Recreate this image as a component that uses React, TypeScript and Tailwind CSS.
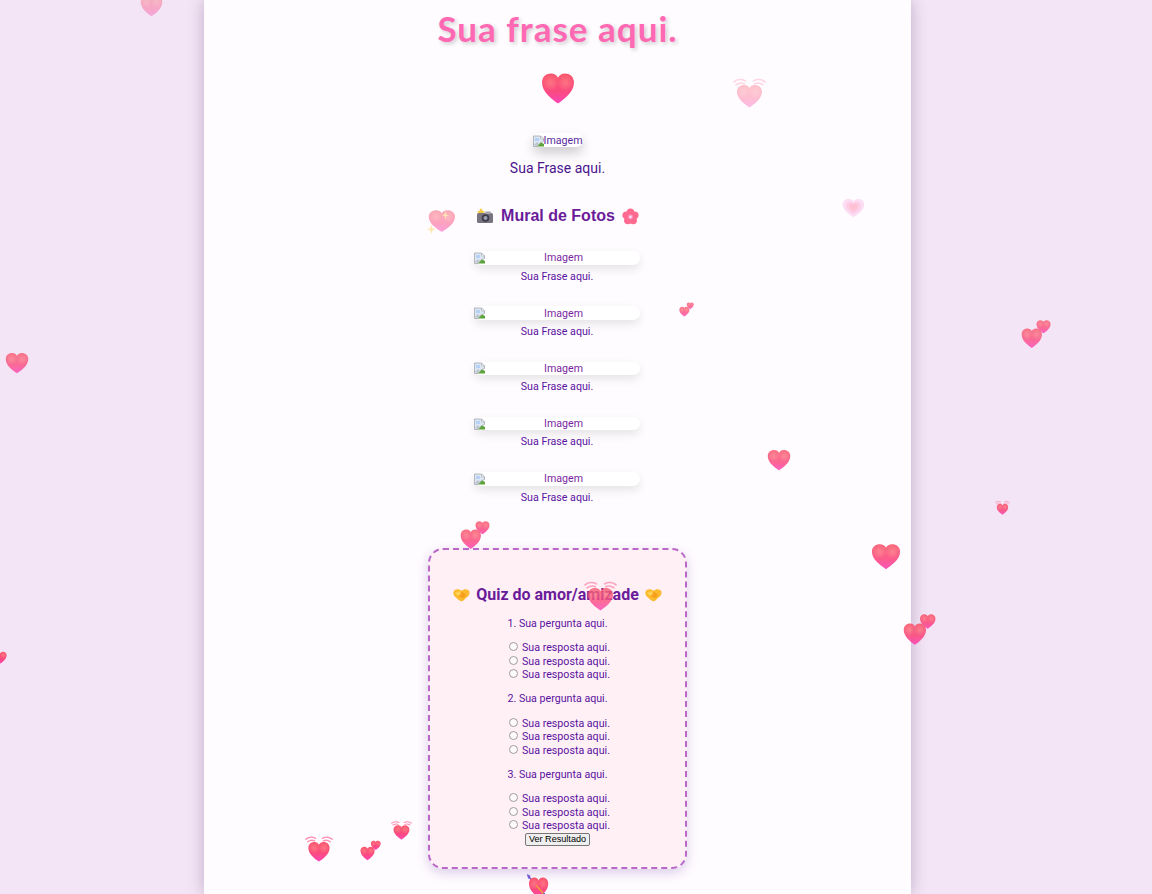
const hearts = [
  { kind: "plain", box: "left-[140px] top-[-5px] w-[23px] h-[22px] opacity-40" },
  { kind: "waves", box: "left-[733px] top-[77px] w-[33px] h-[31px] opacity-35" },
  { kind: "grow", box: "left-[842px] top-[198px] w-[23px] h-[21px] opacity-50" },
  { kind: "spark", box: "left-[427px] top-[209px] w-[28px] h-[25px] opacity-50" },
  { kind: "two", box: "left-[679px] top-[302px] w-[15px] h-[15px] opacity-80" },
  { kind: "two", box: "left-[1021px] top-[319px] w-[30px] h-[30px] opacity-80" },
  { kind: "plain", box: "left-[5px] top-[352px] w-[24px] h-[22px] opacity-80" },
  { kind: "plain", box: "left-[767px] top-[449px] w-[24px] h-[22px] opacity-85" },
  { kind: "waves", box: "left-[995px] top-[500px] w-[15px] h-[15px] opacity-90" },
  { kind: "two", box: "left-[460px] top-[520px] w-[30px] h-[30px] opacity-85" },
  { kind: "plain", box: "left-[871px] top-[543px] w-[30px] h-[27px] opacity-90" },
  { kind: "waves", box: "left-[584px] top-[580px] w-[33px] h-[31px] opacity-80" },
  { kind: "two", box: "left-[903px] top-[613px] w-[33px] h-[33px] opacity-90" },
  { kind: "plain", box: "left-[-6px] top-[651px] w-[13px] h-[13px]" },
  { kind: "waves", box: "left-[391px] top-[820px] w-[21px] h-[20px]" },
  { kind: "waves", box: "left-[305px] top-[835px] w-[28px] h-[27px]" },
  { kind: "two", box: "left-[360px] top-[840px] w-[21px] h-[21px]" },
  { kind: "arrow", box: "left-[526px] top-[874px] w-[25px] h-[26px]" },
];

// fuller than a geometric heart, the lobes nearly touch the box edge
const heartPath =
  "M16 29.500 C11 26 1 19 1 10 C1 4.500 5 1.500 9.500 1.500 C12.500 1.500 15 3 16 5.500 C17 3 19.500 1.500 22.500 1.500 C27 1.500 31 4.500 31 10 C31 19 21 26 16 29.500 Z";

function HeartShape({ transform }: { transform?: string }) {
  return (
    <g transform={transform}>
      <path d={heartPath} fill="url(#heartFill)" />
      <ellipse cx="9" cy="10" rx="8" ry="8" fill="url(#heartGlow)" />
      <ellipse cx="23" cy="10" rx="8" ry="8" fill="url(#heartGlow)" />
    </g>
  );
}

function Waves() {
  return (
    <g fill="none" stroke="#ff8fb0" strokeWidth="1.600" strokeLinecap="round">
      <path d="M1 5 C4 2 9 2 12 4" />
      <path d="M3 8 C6 6 9 6 11 7" />
      <path d="M31 5 C28 2 23 2 20 4" />
      <path d="M29 8 C26 6 23 6 21 7" />
    </g>
  );
}

function FloatingHeart({ kind, className }: { kind: string; className: string }) {
  return (
    <svg viewBox="0 0 32 32" preserveAspectRatio="none" className={"absolute " + className}>
      {kind === "plain" && <HeartShape transform="translate(0 0) scale(1 1.050)" />}
      {kind === "waves" && (
        <>
          <Waves />
          <HeartShape transform="translate(3 7) scale(0.810 0.830)" />
        </>
      )}
      {kind === "two" && (
        <>
          <HeartShape transform="translate(16 0.500) scale(0.500 0.500)" />
          <HeartShape transform="translate(0 9) scale(0.720 0.740)" />
        </>
      )}
      {kind === "grow" && (
        <>
          <path d={heartPath} fill="#f7a8e0" opacity="0.7" />
          <path d={heartPath} fill="#ff8fc0" opacity="0.7" transform="translate(5 4.500) scale(0.690 0.690)" />
          <path d={heartPath} fill="#ff7f9f" opacity="0.8" transform="translate(9.500 8) scale(0.400 0.420)" />
        </>
      )}
      {kind === "spark" && (
        <>
          <HeartShape transform="translate(1 0)" />
          <path d="M5 20 L6.300 24.500 L10 26 L6.300 27.500 L5 32 L3.700 27.500 L0 26 L3.700 24.500 Z" fill="#ffd76a" />
          <path d="M21 3 L22 7 L25 8 L22 9 L21 13 L20 9 L17 8 L20 7 Z" fill="#ffd76a" />
        </>
      )}
      {kind === "arrow" && (
        <>
          <path d="M1 0 L6 2 L3 6 Z" fill="#7a5bd6" />
          <path d="M3 3 L9 9" stroke="#7a5bd6" strokeWidth="2" />
          <HeartShape transform="translate(3 3) scale(0.820 0.900)" />
          <path d="M13 14 L26 28" stroke="#f09a3e" strokeWidth="2" />
          <path d="M22 24 L32 33" stroke="#6a5bd0" strokeWidth="3" />
        </>
      )}
    </svg>
  );
}

function BrokenImage() {
  return (
    <svg viewBox="0 0 11 12" className="w-[11px] h-[12px] shrink-0">
      <path d="M0.500 1 H7.500 L10.500 4 V6.500 L7 8 L4 11.500 H0.500 Z" fill="#dde6f3" stroke="#a3a8ae" strokeWidth="0.800" />
      <path d="M7.500 1 V4 H10.500 Z" fill="#ffffff" stroke="#a3a8ae" strokeWidth="0.600" />
      <path d="M2 3 H6 V6 H2 Z" fill="#b7d0f5" />
      <path d="M4 11.500 L8 7.500 L11 9 V11.500 Z" fill="#5da33b" />
      <path d="M1 10 L4 7 L5.500 8.500 L3.500 11 Z" fill="#bcc2ca" />
    </svg>
  );
}

function Camera() {
  return (
    <svg viewBox="0 0 18 16" className="w-[18px] h-4">
      <path d="M5 0 L6.500 2.500 L9 4 L6.500 5.500 L5 8 L3.500 5.500 L1 4 L3.500 2.500 Z" fill="#f6c945" />
      <rect x="1" y="5" width="16" height="10" rx="1.500" fill="#77747f" />
      <rect x="9" y="3.500" width="6" height="2.500" rx="0.800" fill="#a5a3ad" />
      <circle cx="9.500" cy="10" r="3.800" fill="#3f3c48" />
      <circle cx="9.500" cy="10" r="2" fill="#9a9db5" />
    </svg>
  );
}

function Blossom() {
  return (
    <svg viewBox="0 0 18 18" className="w-[17px] h-[17px]">
      <g fill="#ff6a90">
        <circle cx="9" cy="4.500" r="4" />
        <circle cx="13.500" cy="7.800" r="4" />
        <circle cx="11.800" cy="13.200" r="4" />
        <circle cx="6.200" cy="13.200" r="4" />
        <circle cx="4.500" cy="7.800" r="4" />
      </g>
      <circle cx="9" cy="9.500" r="2.600" fill="#ff9cc0" />
      <circle cx="9" cy="9.500" r="1.200" fill="#f0e6ff" />
    </svg>
  );
}

function Handshake() {
  return (
    <svg viewBox="0 0 18 14" className="w-[17px] h-[14px]">
      <path d="M0.500 3.500 C2 1 5 0.500 7 1.500 L9 2.500 L11 1.500 C13 0.500 16 1 17.500 3.500 C18 6 16 8.500 14 10 L10 13.500 C8.500 14 6.500 13 4.500 11 L1.500 8 C0.500 6.500 0.200 5 0.500 3.500 Z" fill="#fbb92e" />
      <path d="M6 5 L10 3.500 L14 7 L11 10.500 L6 8 Z" fill="#f59f1c" />
      <path d="M2 5 L6 3 L9 5 L6 8 Z" fill="#ffd257" />
    </svg>
  );
}

function GalleryItem() {
  return (
    <div className="flex flex-col items-center">
      <div className="flex w-[166px] h-[13.500px] items-center bg-white rounded-[8px] shadow-[0_4px_10px_rgba(0,0,0,0.1)] text-[10.670px] leading-[13px] text-[#7b1fa2]">
        <BrokenImage />
        <span className="flex-1 text-center pl-[2px]">Imagem</span>
      </div>
      <p className="mt-[5px] h-[14px] text-[10.670px] leading-[14px]">Sua Frase aqui.</p>
    </div>
  );
}

function QuizQuestion({ n }: { n: number }) {
  return (
    <div className="flex flex-col items-center">
      <p className="h-[14px] text-[10.670px] leading-[14px]">{n}. Sua pergunta aqui.</p>
      <div className="mt-[11px] flex flex-col items-start pl-[4px]">
        {[0, 1, 2].map((i) => (
          <label key={i} className="flex h-[13.500px] items-center text-[10.670px] leading-[14px]">
            <input type="radio" name={"q" + n} className="mr-[4px] mb-[3px] w-[9px] h-[9px] opacity-70" />
            Sua resposta aqui.
          </label>
        ))}
      </div>
    </div>
  );
}

export default function App() {
  return (
    <div className="relative h-[894px] overflow-hidden bg-[#f3e5f5] font-['Roboto',sans-serif] text-[#5a12a0]">
      <main className="w-[707px] h-[894px] ml-[204px] flex flex-col items-center bg-[#fffcff] shadow-[0_0_15px_rgba(60,20,90,0.28)]">
        <h1 className="mt-[8px] h-[40px] text-[35px] leading-[40px] font-bold tracking-[1px] text-[#ff69b4] font-['Lato','Open_Sans',sans-serif] [text-shadow:2px_2px_4px_rgba(0,0,0,0.2)]">
          Sua frase aqui.
        </h1>

        <svg viewBox="0 0 32 31" className="mt-[24px] w-[36px] h-[33px]">
          <HeartShape />
        </svg>

        <div className="mt-[28px] flex w-[50px] h-[14px] pt-[1px] items-center bg-white rounded-[8px] shadow-[0_6px_12px_rgba(0,0,0,0.2)] text-[10.670px] leading-[14px] whitespace-nowrap text-[#5a2aa0]">
          <BrokenImage />
          Imagem
        </div>
        <p className="mt-[11px] h-[20px] text-[14px] leading-[20px] text-[#4a148c]">Sua Frase aqui.</p>

        <h2 className="mt-[27px] h-[22px] flex items-center gap-[7px] text-[16px] font-bold text-[#6a1b9a] font-['Liberation_Sans',sans-serif]">
          <Camera />
          Mural de Fotos
          <Blossom />
        </h2>

        <section className="mt-[24px] -ml-[1px] flex flex-col gap-[22.750px]">
          <GalleryItem />
          <GalleryItem />
          <GalleryItem />
          <GalleryItem />
          <GalleryItem />
        </section>

        <section className="mt-[43px] w-[259px] h-[321px] pt-[33px] flex flex-col items-center bg-[#fff0f5] rounded-[15px] border-2 border-dashed border-[#ba68c8] shadow-[0_4px_12px_rgba(74,20,140,0.2)]">
          <h2 className="flex h-[24px] items-center gap-[6px] text-[16px] font-bold text-[#6a1b9a]">
            <Handshake />
            Quiz do amor/amizade
            <Handshake />
          </h2>
          <div className="mt-[10px] flex flex-col gap-[10px]">
            <QuizQuestion n={1} />
            <QuizQuestion n={2} />
            <QuizQuestion n={3} />
          </div>
          <button
            type="button"
            className="w-[65px] h-[13px] px-0 bg-[#efefef] border border-[#767676] rounded-[2px] text-[9.100px] leading-[11px] whitespace-nowrap text-black font-['Liberation_Sans',sans-serif]"
          >
            Ver Resultado
          </button>
        </section>
      </main>

      {hearts.map((h, i) => (
        <FloatingHeart key={i} kind={h.kind} className={h.box} />
      ))}

      <svg className="absolute w-0 h-0">
        <defs>
          <linearGradient id="heartFill" x1="0" y1="0" x2="0" y2="1">
            <stop offset="0" stopColor="#f9566c" />
            <stop offset="0.6" stopColor="#fb4a80" />
            <stop offset="1" stopColor="#fb45b8" />
          </linearGradient>
          <radialGradient id="heartGlow">
            <stop offset="0" stopColor="#ff8d8d" stopOpacity="0.6" />
            <stop offset="1" stopColor="#ff8d8d" stopOpacity="0" />
          </radialGradient>
        </defs>
      </svg>
    </div>
  );
}
